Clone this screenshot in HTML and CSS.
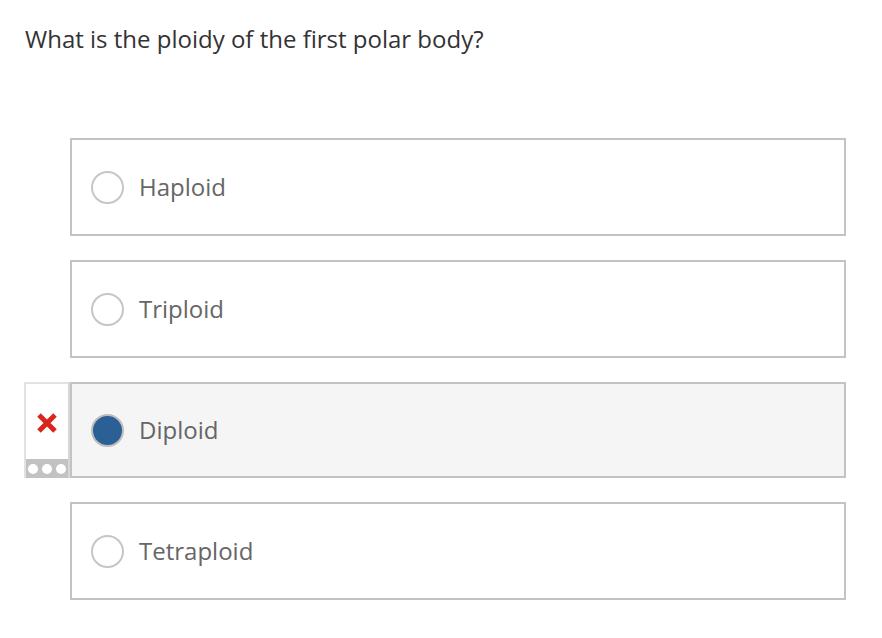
FILE: index.html
```html
<!DOCTYPE html>
<html>
<head>
<meta charset="utf-8">
<link rel="stylesheet" href="styles.css">
</head>
<body>
<div class="page">
  <p class="question">What is the ploidy of the first polar body?</p>
  <div class="options">
    <div class="row">
      <div class="side"></div>
      <div class="option"><span class="radio"></span><span class="label">Haploid</span></div>
    </div>
    <div class="row">
      <div class="side"></div>
      <div class="option"><span class="radio"></span><span class="label">Triploid</span></div>
    </div>
    <div class="row">
      <div class="side">
        <div class="panel">
          <div class="mark">
            <svg width="22" height="22" viewBox="0 0 22 22"><path d="M3 3 L19 19 M19 3 L3 19" stroke="#d9261c" stroke-width="5" stroke-linecap="butt"/></svg>
          </div>
          <div class="dots"><span></span><span></span><span></span></div>
        </div>
      </div>
      <div class="option selected"><span class="radio"></span><span class="label">Diploid</span></div>
    </div>
    <div class="row">
      <div class="side"></div>
      <div class="option"><span class="radio"></span><span class="label">Tetraploid</span></div>
    </div>
  </div>
</div>
</body>
</html>
```
FILE: styles.css
```css
html, body {
  margin: 0;
  padding: 0;
  background: #fff;
}
.page {
  font-family: "Open Sans", "Liberation Sans", sans-serif;
  padding: 23px 0 0 25px;
}
.question {
  margin: 0;
  font-size: 24px;
  line-height: 32px;
  color: #333;
}
.options {
  display: flex;
  flex-direction: column;
  gap: 24px;
  margin-top: 83px;
  margin-left: -1px;
}
.row {
  display: flex;
}
.side {
  width: 46px;
  flex: none;
  display: flex;
}
.option {
  width: 776px;
  height: 98px;
  box-sizing: border-box;
  border: 2px solid #c3c3c3;
  display: flex;
  align-items: center;
  padding-left: 19px;
  background: #fff;
}
.option.selected {
  height: 96px;
  background: #f5f5f5;
}
.radio {
  width: 33px;
  height: 33px;
  box-sizing: border-box;
  border: 2px solid #c6c6c6;
  border-radius: 50%;
  background: #fff;
  flex: none;
}
.selected .radio {
  background: #2a6096;
  border-color: #bdbdbd;
}
.label {
  margin-left: 15px;
  font-size: 24px;
  color: #666;
  position: relative;
  top: -1px;
}
.panel {
  flex: 1;
  box-sizing: border-box;
  border: 2px solid #e2e2e2;
  border-bottom: none;
  border-right-color: #d6d6d6;
  display: flex;
  flex-direction: column;
  background: #fff;
}
.mark {
  flex: 1;
  display: flex;
  align-items: center;
  justify-content: center;
  padding-top: 2px;
}
.dots {
  height: 19px;
  background: #c2c2c2;
  display: flex;
  align-items: center;
  justify-content: center;
  gap: 4px;
}
.dots span {
  width: 10px;
  height: 10px;
  border-radius: 50%;
  background: #fff;
}
```
